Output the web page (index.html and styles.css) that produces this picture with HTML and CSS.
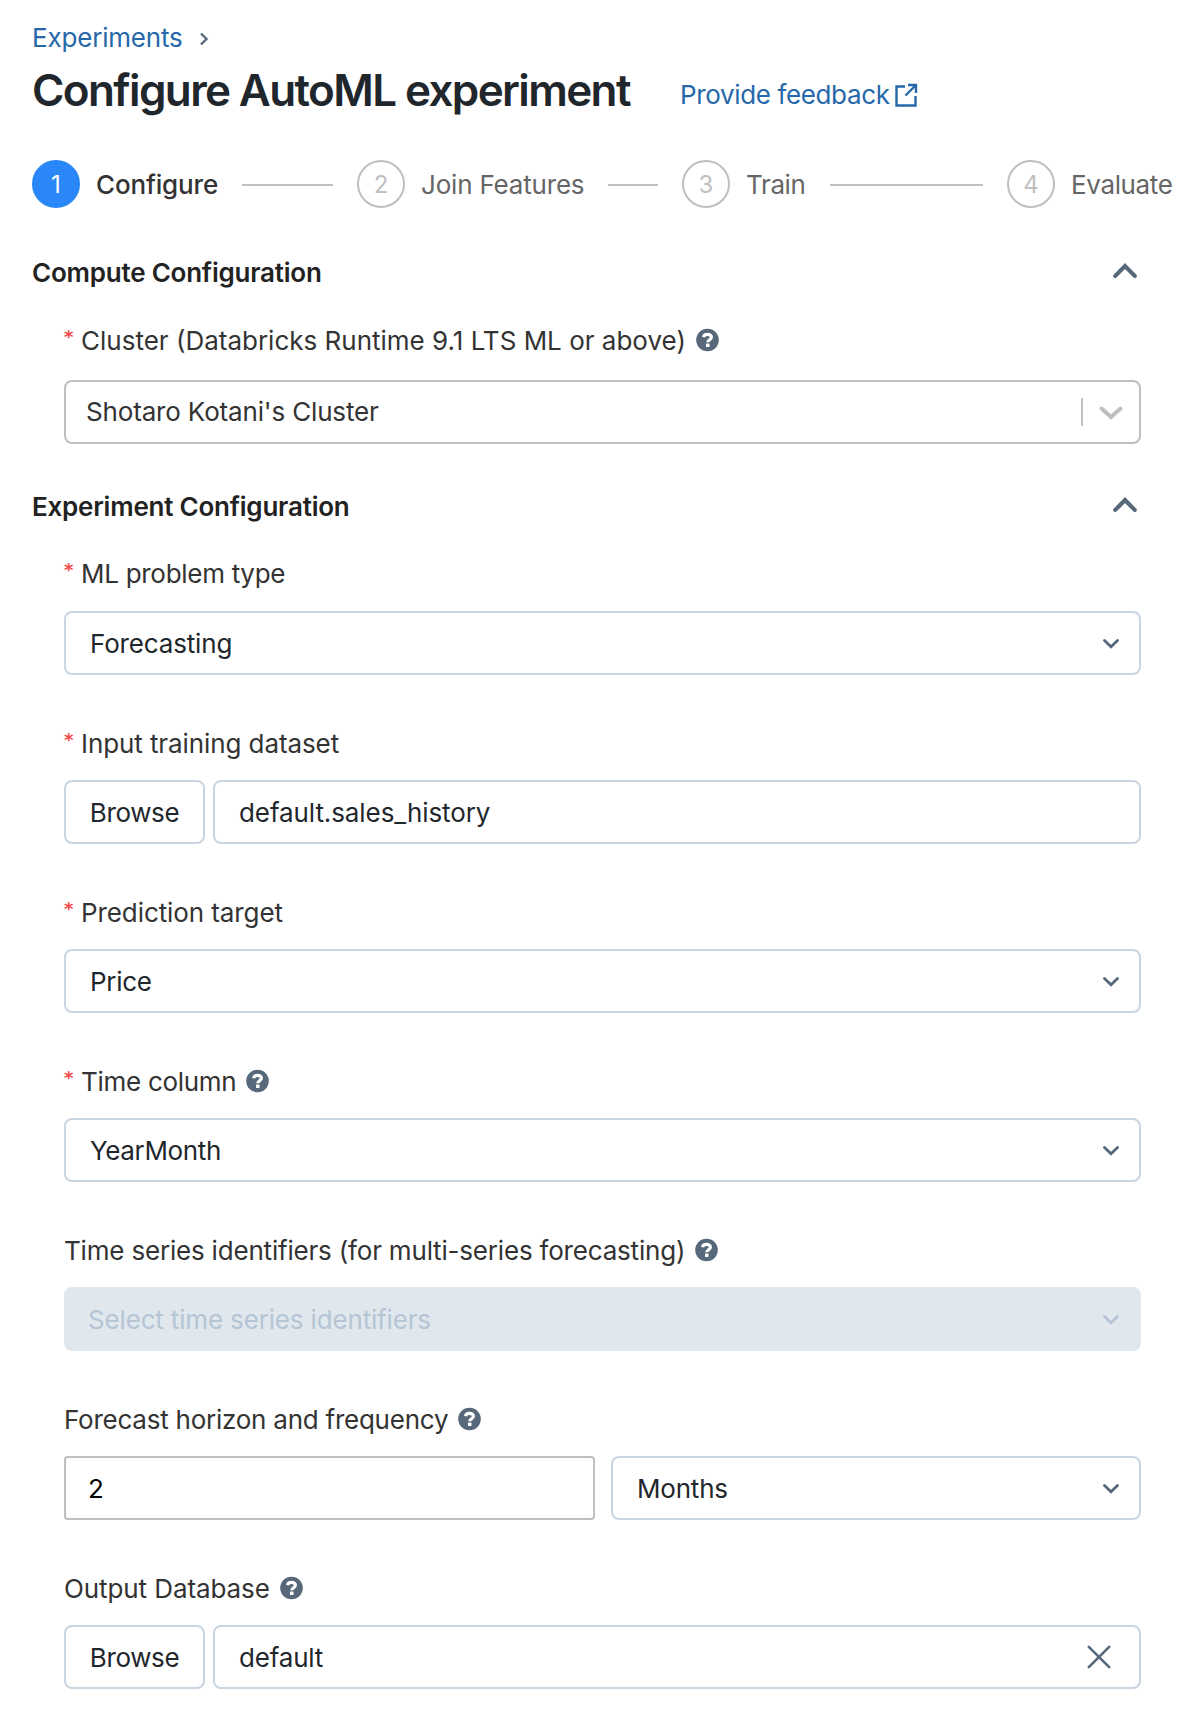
FILE: index.html
```html
<!DOCTYPE html>
<html lang="en">
<head>
<meta charset="utf-8">
<title>Configure AutoML experiment</title>
<link rel="stylesheet" href="styles.css">
</head>
<body>
<svg class="sprite" aria-hidden="true">
  <symbol id="down" viewBox="0 0 16 10"><path d="M1.500 1.500 8 7.800l6.500-6.300" fill="none" stroke="currentColor" stroke-width="2.800" stroke-linecap="round"/></symbol>
  <symbol id="up" viewBox="0 0 24 16"><path d="M2.300 12.900 12 3l9.700 9.900" fill="none" stroke="currentColor" stroke-width="4.200" stroke-linecap="round"/></symbol>
  <symbol id="help" viewBox="0 0 24 24"><circle cx="11.500" cy="12" r="11.300" fill="currentColor"/><path d="M7.600 9.200C8.100 5.600 15.400 5.400 15.400 9.200c0 2.800-3.600 2.500-3.600 5" fill="none" stroke="#fff" stroke-width="3.200"/><rect x="10" y="15.600" width="3.500" height="3.400" rx=".6" fill="#fff"/></symbol>
</svg>
<main class="page">
  <nav class="crumbs"><a class="link ls-20" href="#">Experiments</a><svg class="crumb-sep" viewBox="0 0 10 14"><path d="M2 1.500 7.500 7 2 12.500" fill="none" stroke="currentColor" stroke-width="2.400"/></svg></nav>
  <header class="heading">
    <h1 class="title">Configure AutoML experiment</h1>
    <a class="link feedback" href="#"><span class="ls-33">Provide feedback</span><svg class="external" viewBox="0 0 24 24"><path d="M11 3.500H2.500v19h19V13M14 2h8v8M22 2 11.500 12.500" fill="none" stroke="currentColor" stroke-width="2.400"/></svg></a>
  </header>
  <ol class="steps">
    <li class="step active"><span class="num">1</span><span class="name ls-16">Configure</span><i class="line"></i></li>
    <li class="step"><span class="num">2</span><span class="name ls-20">Join Features</span><i class="line"></i></li>
    <li class="step"><span class="num">3</span><span class="name ls-33">Train</span><i class="line"></i></li>
    <li class="step last"><span class="num">4</span><span class="name ls-33">Evaluate</span></li>
  </ol>

  <section class="section compute">
    <div class="section-head"><h2>Compute Configuration</h2><svg class="up"><use href="#up"/></svg></div>
    <div class="field">
      <div class="label"><b class="req">*</b><span>Cluster (Databricks Runtime 9.1 LTS ML or above)</span><svg class="help"><use href="#help"/></svg></div>
      <div class="box grey cluster"><span class="ls-16">Shotaro Kotani's Cluster</span><i class="divider"></i><svg class="big-down" viewBox="0 0 24 16"><path d="m2.500 3.500 9.500 8.500 9.500-8.500" fill="none" stroke="currentColor" stroke-width="4" stroke-linecap="round"/></svg></div>
    </div>
  </section>

  <section class="section experiment">
    <div class="section-head"><h2>Experiment Configuration</h2><svg class="up"><use href="#up"/></svg></div>
    <div class="field">
      <div class="label first"><b class="req">*</b><span class="ls-30">ML problem type</span></div>
      <div class="box"><span class="ls-16">Forecasting</span><svg class="down"><use href="#down"/></svg></div>
    </div>
    <div class="field">
      <div class="label"><b class="req">*</b><span class="ls-10">Input training dataset</span></div>
      <div class="row"><button class="browse"><span class="ls-33">Browse</span></button><div class="box"><span class="ls-10">default.sales_history</span></div></div>
    </div>
    <div class="field">
      <div class="label"><b class="req">*</b><span class="ls-10">Prediction target</span></div>
      <div class="box"><span class="ls-30">Price</span><svg class="down"><use href="#down"/></svg></div>
    </div>
    <div class="field">
      <div class="label"><b class="req">*</b><span class="ls-30">Time column</span><svg class="help"><use href="#help"/></svg></div>
      <div class="box"><span class="ls-33">YearMonth</span><svg class="down"><use href="#down"/></svg></div>
    </div>
    <div class="field">
      <div class="label"><span class="ls-20">Time series identifiers (for multi-series forecasting)</span><svg class="help"><use href="#help"/></svg></div>
      <div class="box disabled"><span class="ls-16">Select time series identifiers</span><svg class="down"><use href="#down"/></svg></div>
    </div>
    <div class="field">
      <div class="label"><span class="ls-25">Forecast horizon and frequency</span><svg class="help"><use href="#help"/></svg></div>
      <div class="row halves"><div class="box grey number"><span>2</span></div><div class="box"><span class="ls-20">Months</span><svg class="down"><use href="#down"/></svg></div></div>
    </div>
    <div class="field">
      <div class="label"><span class="ls-10">Output Database</span><svg class="help"><use href="#help"/></svg></div>
      <div class="row"><button class="browse"><span class="ls-33">Browse</span></button><div class="box"><span class="ls-20">default</span><svg class="clear" viewBox="0 0 24 24"><path d="m1.800 1.800 20.400 20.400M22.200 1.800 1.800 22.200" fill="none" stroke="currentColor" stroke-width="2.600" stroke-linecap="round"/></svg></div></div>
    </div>
  </section>
</main>
</body>
</html>
```
FILE: styles.css
```css
* { box-sizing: border-box; }
body { margin: 0; background: #fff; color: #333; font: 400 26px/32px Inter, "Liberation Sans", sans-serif; }
svg { display: block; flex: none; overflow: visible; }
.sprite { position: absolute; width: 0; height: 0; }
.page { padding: 22px 0 0 32px; height: 1726px; overflow: hidden; }

/* Tracking steps */
.ls-10 { letter-spacing: -0.09px; }
.ls-16 { letter-spacing: -0.16px; }
.ls-20 { letter-spacing: -0.19px; }
.ls-25 { letter-spacing: -0.24px; }
.ls-30 { letter-spacing: -0.29px; }
.ls-33 { letter-spacing: -0.36px; }

.link { color: #2668a9; text-decoration: none; }
.crumbs { display: flex; align-items: center; height: 32px; }
.crumb-sep { width: 10px; height: 14px; margin: 2px 0 0 16px; color: #56687a; }
.heading { display: flex; align-items: center; height: 56px; margin-top: 8px; }
.title { margin: 0; width: 648px; font-size: 44px; line-height: 56px; font-weight: 600; color: #1f272d; white-space: nowrap; letter-spacing: -1.62px; }
.feedback { display: flex; align-items: center; margin-top: 9px; white-space: nowrap; }
.external { width: 24px; height: 24px; margin-left: 4px; }

.steps { display: flex; margin: 42px 0 0; padding: 0; list-style: none; }
.step { display: flex; align-items: center; width: 325px; height: 48px; color: #666; white-space: nowrap; }
.step.last { width: auto; }
.num { display: flex; align-items: center; justify-content: center; flex: none; width: 48px; height: 48px; margin-right: 16px; padding-top: 1px; border: 2px solid #bfbfbf; border-radius: 50%; color: #bfbfbf; font-size: 24px; }
.active .num { background: #2a87f8; border-color: #2a87f8; color: #fff; }
.name { padding-top: 2px; }
.active .name { color: #333; font-weight: 500; }
.line { flex: 1; height: 2px; margin: 2px 24px 0; background: #bfbfbf; }

.section-head { display: flex; justify-content: space-between; align-items: center; height: 32px; padding-right: 59px; }
.section-head h2 { margin: 0; font-size: 26px; line-height: 32px; font-weight: 600; color: #222; letter-spacing: -0.22px; }
.up { width: 24px; height: 16px; margin-top: -4px; color: #56687a; }
.compute { margin-top: 49px; }
.experiment { margin-top: 47px; }

.field { margin-left: 32px; width: 1077px; }
.label { display: flex; align-items: center; height: 32px; margin: 53px 0 20px; white-space: nowrap; }
.compute .label { margin: 36px 0 23px; }
.label.first { margin: 35px 0 21px; }
.req { width: 17px; margin-top: -9px; color: #f5484b; font: 700 18px/20px "DejaVu Sans", sans-serif; }
.help { width: 24px; height: 24px; margin: -2px 0 0 10px; color: #56687a; }

.row { display: flex; gap: 8px; }
.row .box { flex: 1; }
.halves { gap: 16px; }
.halves .number { flex: 0 0 531px; }
.browse, .box { height: 64px; border: 2px solid #c9d5e1; border-radius: 8px; background: #fff; color: #1f272d; font: inherit; }
.browse { width: 141px; padding: 2px 0 0; }
.box { display: flex; align-items: center; justify-content: space-between; padding: 2px 20px 0 24px; white-space: nowrap; }
.box.grey { border-color: #bfbfbf; color: #333; }
.box.cluster { padding: 0 16px 0 20px; }
.divider { width: 2px; height: 28px; margin: 0 16px 0 auto; background: #bfbfbf; }
.big-down { width: 24px; height: 16px; margin-top: 2px; color: #bfbfbf; }
.box.number { border-radius: 4px; color: #000; padding-left: 22px; }
.down { width: 16px; height: 10px; color: #56687a; }
.box.disabled { background: #e0e7ed; border-color: #e0e7ed; color: #b5c5d5; padding-left: 22px; }
.disabled .down { color: #b5c5d5; }
.clear { width: 24px; height: 24px; margin: -2px 8px 0 0; color: #56687a; }
```
